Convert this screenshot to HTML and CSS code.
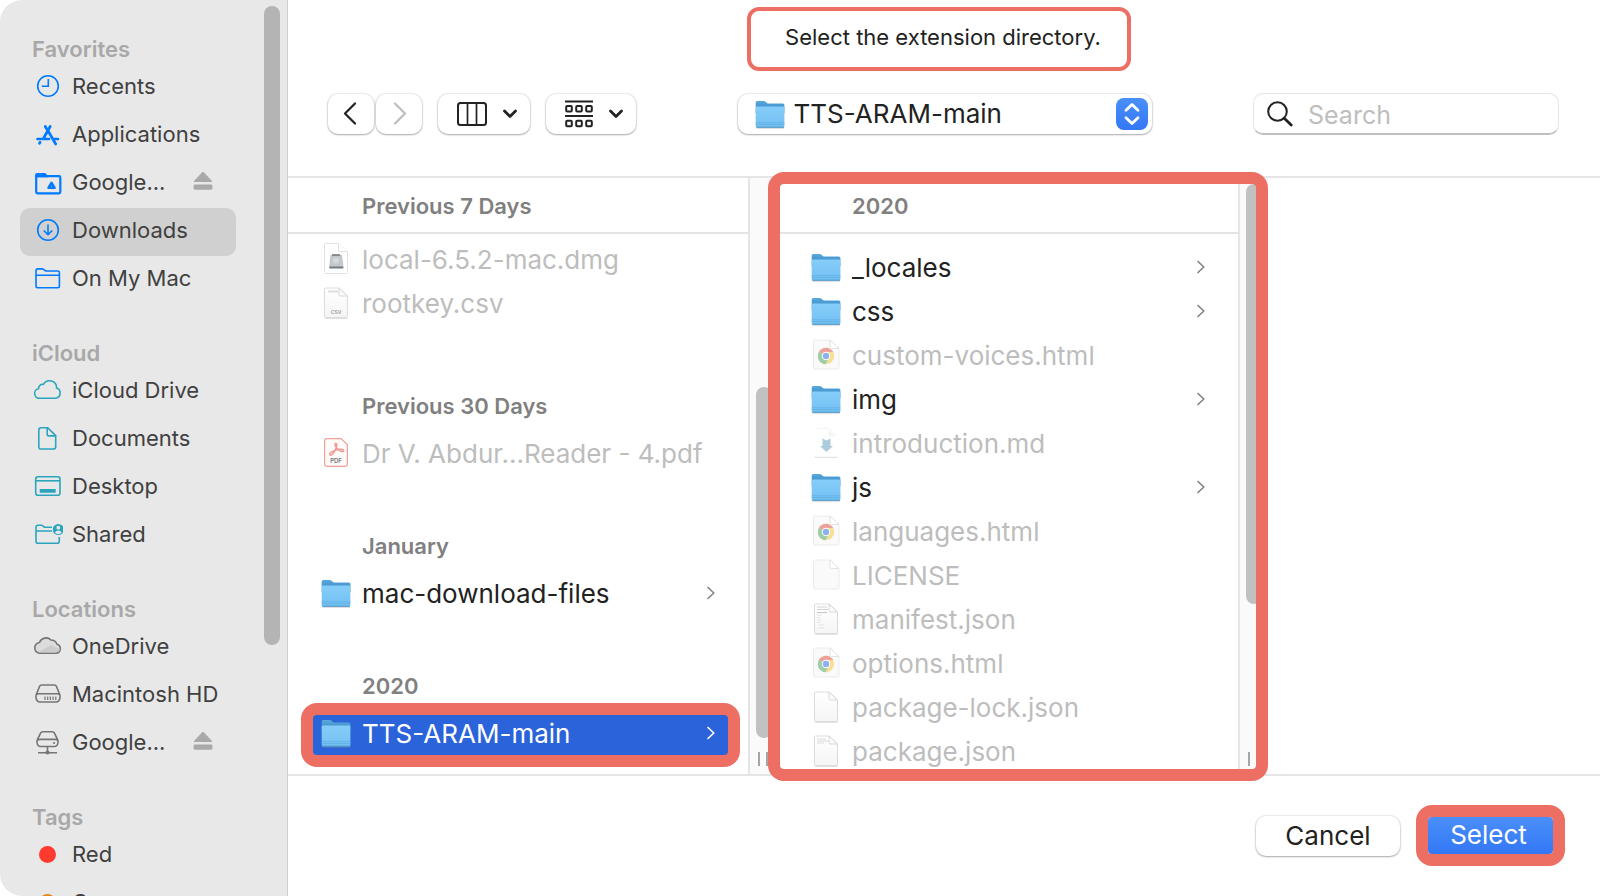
FILE: index.html
```html
<!DOCTYPE html>
<html lang="en">
<head>
<meta charset="utf-8">
<title>Select the extension directory</title>
<link rel="stylesheet" href="styles.css">
</head>
<body>
<svg class="sprite" width="0" height="0" aria-hidden="true">
  <defs>
    <linearGradient id="folder-front" x1="0" y1="0" x2="0" y2="1">
      <stop offset="0" stop-color="#86cdf9"/><stop offset="1" stop-color="#72c0f2"/>
    </linearGradient>
    <linearGradient id="folder-back" x1="0" y1="0" x2="0" y2="1">
      <stop offset="0" stop-color="#5aa9dc"/><stop offset="1" stop-color="#2f7fc4"/>
    </linearGradient>
    <linearGradient id="paper" x1="0" y1="0" x2="0" y2="1">
      <stop offset="0" stop-color="#ffffff"/><stop offset="1" stop-color="#f5f5f5"/>
    </linearGradient>
    <symbol id="i-folder" viewBox="0 0 32 32">
      <path d="M2.500 29.500h27.500v.9h-27.500z" fill="#8a8f96" opacity=".7"/>
      <path d="M1.700 4.500q0-1.500 1.500-1.500h6.600q1 0 1.700.7l1.500 1.400q.6.500 1.500.5h14.300q1.600 0 1.600 1.500v8h-28.700z" fill="url(#folder-back)"/>
      <path d="M1.700 9.800q0-1.200 1.200-1.200h26.300q1.200 0 1.200 1.200v18.200q0 1.500-1.500 1.500h-25.700q-1.500 0-1.500-1.500z" fill="url(#folder-front)"/>
      <path d="M1.700 24.700h28.700M1.700 26.500h28.700" stroke="#5eaee2" stroke-width=".7"/>
      <path d="M2.300 29.200h27.500" stroke="#4b92c4" stroke-width="1"/>
    </symbol>
    <symbol id="i-dmg" viewBox="0 0 32 32">
      <path d="M4.500 1.500q0-1 1-1h13l9 8.500v20.500q0 1-1 1h-21q-1 0-1-1z" fill="#fff" stroke="#e2e2e2"/>
      <path d="M18.500.5v6.500q0 1.500 1.500 1.500h7" fill="#fff" stroke="#e2e2e2"/>
      <path d="M10.500 12h11.500l1.300 10v3h-14v-3z" fill="#c3c8cc"/>
      <path d="M12 12h8" stroke="#6e7275" stroke-width="1.500"/>
      <circle cx="16" cy="17.500" r="3" fill="#d5d9dc"/>
      <path d="M9.300 24.500h14" stroke="#777b7e" stroke-width="2"/>
    </symbol>
    <symbol id="i-page" viewBox="0 0 32 32">
      <path d="M5 31h22.500" stroke="#c4c4c4" stroke-width="1"/>
      <path d="M4.500 2q0-1 1-1h13.500l8.500 8v20.500q0 1-1 1h-21q-1 0-1-1z" fill="url(#paper)" stroke="#dcdcdc"/>
      <path d="M19 1v6.500q0 1.500 1.500 1.500h7z" fill="#fbfbfb" stroke="#d6d6d6"/>
    </symbol>
    <symbol id="i-csv" viewBox="0 0 32 32">
      <use href="#i-page"/>
      <path d="M8 4.500h10" stroke="#dedede" stroke-width="2"/>
      <text x="16" y="27" class="badge-csv">CSV</text>
    </symbol>
    <symbol id="i-json" viewBox="0 0 32 32">
      <use href="#i-page"/>
      <path d="M7 4h10M7 6.500h11" stroke="#d3d3d3" stroke-width="1"/>
      <path d="M7 9.500h10" stroke="#c4c4c4" stroke-width="1"/>
      <path d="M7 12h5M7 14.500h3M7 17h4M7 19.500h3M9 22h5M8 25h6" stroke="#e4e4e4" stroke-width="1"/>
    </symbol>
    <symbol id="i-json-head" viewBox="0 0 32 32">
      <use href="#i-page"/>
      <path d="M7 4h9M7 6h11M7 8h7" stroke="#dadada" stroke-width="1"/>
    </symbol>
    <symbol id="i-blank" viewBox="0 0 32 32">
      <path d="M3.500 2.500q0-1.500 1.500-1.500h15l9 8.500v19q0 1.500-1.500 1.500h-22.500q-1.500 0-1.500-1.500z" fill="#fafafa" stroke="#ececec"/>
      <path d="M20 1v7q0 1.500 1.500 1.500h7.500z" fill="#fff" stroke="#dcdcdc" stroke-width=".8"/>
    </symbol>
    <symbol id="i-html" viewBox="0 0 32 32">
      <use href="#i-blank"/>
      <circle cx="16" cy="17" r="8.200" fill="#f9df94"/>
      <path d="M16 17L8.900 12.900A8.200 8.200 0 0 1 23.100 12.900z" fill="#eda19c"/>
      <path d="M16 17L8.900 12.900A8.200 8.200 0 0 0 15.500 25.200l3.600-6.400z" fill="#9dceaa"/>
      <path d="M16 12.900h7.100l-4 5z" fill="#f9df94"/>
      <circle cx="16" cy="17" r="4.200" fill="#fff"/>
      <circle cx="16" cy="17" r="3.200" fill="#8fb0f3"/>
    </symbol>
    <symbol id="i-md" viewBox="0 0 32 32">
      <path d="M5 1.300h13M19 1.500l8 8" stroke="#f2f2f2" fill="none"/>
      <path d="M18.500 2.500v5.500q0 1.500 1.500 1.500h5.500z" fill="#f6f6f6"/>
      <path d="M4.500 30.300h23" stroke="#dcdcdc"/>
      <path d="M12.500 11.500l4 2 4-2v7.500h2.500l-6.500 6-6.500-6h2.500z" fill="#aecbdb"/>
    </symbol>
    <symbol id="i-pdf" viewBox="0 0 32 32">
      <path d="M7 1.600h14l6.400 6v19.400q0 2.400-2.400 2.400h-18q-2.400 0-2.400-2.400v-23q0-2.400 2.400-2.400z" fill="#fdfafa" stroke="#f2a09a" stroke-width="1.200"/>
      <path d="M10 18c-1.500-1 1-3 4-4.200s7.500-1.800 9.200-1c1.700 1-.7 2.500-3.500 1-2.500-1.500-5.200-5.200-4.700-6.700.5-1.300 2.200-.6 1.800 1.500-.5 3-4.200 10.500-6.800 9.400z" fill="none" stroke="#f2968f" stroke-width="1.400"/>
      <text x="16" y="26" class="badge-pdf">PDF</text>
    </symbol>
    <symbol id="i-chev" viewBox="0 0 10 14">
      <path d="M2 1.500l5.800 5.500-5.800 5.500" fill="none" stroke="currentColor" stroke-width="1.700" stroke-linecap="round" stroke-linejoin="round"/>
    </symbol>
    <symbol id="i-down" viewBox="0 0 16 12">
      <path d="M2.500 3l5.500 5.500L13.500 3" fill="none" stroke="currentColor" stroke-width="2.800" stroke-linecap="round" stroke-linejoin="round"/>
    </symbol>
    <symbol id="i-eject" viewBox="0 0 20 20">
      <path d="M9.200 1.300q.8-.8 1.600 0l8.200 8.700q.6.900-.4 1h-17.200q-1-.1-.4-1z" fill="#a9a9a9"/>
      <rect x=".6" y="13.500" width="18.800" height="5.200" rx="1.400" fill="#a9a9a9"/>
    </symbol>
  </defs>
</svg>

<div class="dialog">
  <aside class="sidebar">
    <nav class="places" aria-label="Places">
      <section class="place-group">
        <h2 class="place-title">Favorites</h2>
        <a class="place blue" href="#"><svg class="place-icon" viewBox="0 0 32 32"><circle cx="17" cy="16" r="10.300"/><path d="M17.300 9v7.300h-6.500"/></svg>Recents</a>
        <a class="place blue" href="#"><svg class="place-icon" viewBox="0 0 32 32"><g stroke-width="2.700" stroke-linecap="round"><path d="M14.300 8.500l1.600 2.700M19.200 8.500L12.700 20M6.500 21h11.500M17.300 13.200l7.400 12.800M23.500 21h3.500M9.100 24.300l-.6 1"/></g></svg>Applications</a>
        <div class="place-line">
          <a class="place blue" href="#"><svg class="place-icon" viewBox="0 0 32 32"><path d="M5.200 9.500v16.500q0 1.300 1.300 1.300h21.500q1.300 0 1.300-1.300v-14.500q0-1.300-1.300-1.300h-22.800" stroke-width="2.200"/><path d="M4.100 11.300v-2.300q0-2 2-2h8l3 2.800v1.500z" fill="currentColor" stroke="none"/><path d="M20.500 16.800l3 5h-6z" stroke-width="2.600" stroke-linejoin="round"/></svg>Google...</a>
          <button class="eject" type="button" aria-label="Eject"><svg width="20" height="20"><use href="#i-eject"/></svg></button>
        </div>
        <a class="place blue current" href="#"><svg class="place-icon" viewBox="0 0 32 32"><circle cx="17" cy="16" r="10.300"/><path d="M17 10.500v10M12.800 16.500l4.200 4.200 4.200-4.200"/></svg>Downloads</a>
        <a class="place blue" href="#"><svg class="place-icon" viewBox="0 0 32 32"><path d="M5 24q0 1.700 1.700 1.700h20q1.700 0 1.700-1.700v-13.300q0-1.700-1.700-1.700h-12l-2.200-1.700q-.6-.4-1.500-.4h-4.300q-1.700 0-1.700 1.700zM5 13.300h23.400"/></svg>On My Mac</a>
      </section>
      <section class="place-group">
        <h2 class="place-title">iCloud</h2>
        <a class="place teal" href="#"><svg class="place-icon" viewBox="0 0 32 32"><path d="M9.500 24.200h14.800a5.300 5.300 0 0 0 1.300-10.300a7 7 0 0 0-13.100-3.500a4.200 4.200 0 0 0-5 4.300a4.800 4.800 0 0 0 2 9.500z"/></svg>iCloud Drive</a>
        <a class="place teal" href="#"><svg class="place-icon" viewBox="0 0 32 32"><path d="M10 5.700h6.700l8 8v11q0 2.300-2.300 2.300h-12.400q-2.200 0-2.200-2.300v-16.700q0-2.300 2.200-2.300zM16.200 6v6.200q0 1.700 1.700 1.700h6.500"/></svg>Documents</a>
        <a class="place teal" href="#"><svg class="place-icon" viewBox="0 0 32 32"><rect x="4.700" y="6.800" width="24.300" height="18.400" rx="2.300"/><path d="M4.700 10.800h24.300"/><rect x="8.700" y="19" width="16" height="3.700" rx=".6" fill="currentColor" stroke="none"/></svg>Desktop</a>
        <a class="place teal" href="#"><svg class="place-icon" viewBox="0 0 32 32"><path d="M21 9.200h-7.500l-1.700-1.400q-.6-.5-1.500-.5h-3.300q-2 0-2 2v14q0 2 2 2h19.300q2 0 2-2v-4.300M5 13h16"/><circle cx="27.300" cy="11.500" r="5.500" fill="currentColor" stroke="none"/><circle cx="27.300" cy="9.700" r="1.900" fill="#e8e8e8" stroke="none"/><path d="M23.900 14.700q1-2.300 3.400-2.300t3.400 2.300q-1.400 1.300-3.400 1.300t-3.400-1.300z" fill="#e8e8e8" stroke="none"/></svg>Shared</a>
      </section>
      <section class="place-group">
        <h2 class="place-title">Locations</h2>
        <a class="place gray" href="#"><svg class="place-icon" viewBox="0 0 32 32"><path d="M8.500 23.200h16.500a4.600 4.600 0 0 0 1-9a6.500 6.500 0 0 0-6-4.200a7 7 0 0 0-11.500 2.500a5.400 5.400 0 0 0 0 10.700z" fill="#dcdcdc"/><path d="M7 22.300l13-7 9 4-1.500 2.500-3 .7z" fill="#cbcbcb" stroke="none"/></svg>OneDrive</a>
        <a class="place gray" href="#"><svg class="place-icon" viewBox="0 0 32 32"><path d="M10.500 7h13q1.300 0 1.900 1.300l3.300 8.300q.5 1.500.3 3-.6 4.400-4 4.400h-16q-3.400 0-4-4.400-.2-1.500.3-3l3.300-8.300q.6-1.300 1.900-1.300zM5.500 16.500q1-.7 2.500-.7h18q1.500 0 2.500.7"/><path d="M14 18.500v3.500M16.700 18.500v3.500M19.400 18.500v3.500M22.100 18.500v3.500M24.800 18.500v3.500" stroke-width="1.200"/></svg>Macintosh HD</a>
        <div class="place-line">
          <a class="place gray" href="#"><svg class="place-icon" viewBox="0 0 32 32"><path d="M11.500 5.700h10q1.200 0 1.800 1.200l3.200 6.500q.7 1.500.5 3.100-.6 4-3.500 4h-14q-2.900 0-3.500-4-.2-1.600.5-3.100l3.200-6.500q.6-1.200 1.800-1.200zM6.500 14q1-.6 2.500-.6h15q1.500 0 2.500.6M16.500 20.500v5M7 26.700h19"/><circle cx="23" cy="17" r="1.100" fill="currentColor" stroke="none"/><circle cx="16.500" cy="26.500" r="2.100" fill="currentColor" stroke="none"/></svg>Google...</a>
          <button class="eject" type="button" aria-label="Eject"><svg width="20" height="20"><use href="#i-eject"/></svg></button>
        </div>
      </section>
      <section class="place-group">
        <h2 class="place-title">Tags</h2>
        <a class="place" href="#"><span class="tag red"></span>Red</a>
        <a class="place" href="#"><span class="tag orange"></span>Orange</a>
      </section>
    </nav>
    <div class="side-thumb"></div>
  </aside>

  <main class="main">
    <header class="top">
      <p class="prompt">Select the extension directory.</p>
      <div class="toolbar">
        <div class="tools">
          <div class="nav-pair">
            <button class="btn nav" type="button" aria-label="Back"><svg width="16" height="24" viewBox="0 0 16 24"><path d="M12 1.500L2 11.500l10 10" fill="none" stroke="#222" stroke-width="2.200" stroke-linecap="round" stroke-linejoin="round"/></svg></button>
            <button class="btn nav" type="button" aria-label="Forward"><svg width="16" height="24" viewBox="0 0 16 24"><path d="M4 1.500l10 10-10 10" fill="none" stroke="#bdbdbd" stroke-width="2.200" stroke-linecap="round" stroke-linejoin="round"/></svg></button>
          </div>
          <button class="btn view" type="button" aria-label="Column view"><svg width="30" height="24" viewBox="0 0 30 24"><rect x="1" y="1" width="28" height="22" rx="2.500" fill="none" stroke="#222" stroke-width="2"/><path d="M10.500 1v22M19.500 1v22" stroke="#222" stroke-width="1.700"/></svg><svg width="16" height="12"><use href="#i-down"/></svg></button>
          <button class="btn view group-view" type="button" aria-label="Group items"><svg width="28" height="28" viewBox="0 0 28 28"><g fill="none" stroke="#222" stroke-width="2"><path d="M0 1.500h28M0 16h28"/><rect x="1.200" y="6" width="5.600" height="5.600" rx="1"/><rect x="11.200" y="6" width="5.600" height="5.600" rx="1"/><rect x="21.200" y="6" width="5.600" height="5.600" rx="1"/><rect x="1.200" y="20.700" width="5.600" height="5.600" rx="1"/><rect x="11.200" y="20.700" width="5.600" height="5.600" rx="1"/><rect x="21.200" y="20.700" width="5.600" height="5.600" rx="1"/></g></svg><svg width="16" height="12"><use href="#i-down"/></svg></button>
        </div>
        <label class="btn location">
          <svg width="32" height="32"><use href="#i-folder"/></svg>
          <select class="location-select" aria-label="Folder"><option>TTS-ARAM-main</option></select>
          <span class="stepper"><svg width="32" height="32" viewBox="0 0 32 32"><path d="M10 12.300l6-5.800 6 5.800M10 19.700l6 5.800 6-5.800" fill="none" stroke="#fff" stroke-width="2.800" stroke-linecap="round" stroke-linejoin="round"/></svg></span>
        </label>
        <label class="search">
          <svg width="26" height="26" viewBox="0 0 26 26"><circle cx="10.500" cy="10.500" r="9.300" fill="none" stroke="#222" stroke-width="2"/><path d="M17.200 17.200l7 6.800" stroke="#222" stroke-width="2.800" stroke-linecap="round"/></svg>
          <input class="search-input" type="text" placeholder="Search" aria-label="Search">
        </label>
      </div>
    </header>

    <div class="columns">
      <section class="column">
        <div class="list">
          <h3 class="sticky">Previous 7 Days</h3>
          <div class="files first-files">
            <button class="file" type="button" disabled><svg width="32" height="32"><use href="#i-dmg"/></svg><span>local-6.5.2-mac.dmg</span></button>
            <button class="file" type="button" disabled><svg width="32" height="32"><use href="#i-csv"/></svg><span>rootkey.csv</span></button>
          </div>
          <h3 class="group">Previous 30 Days</h3>
          <div class="files">
            <button class="file" type="button" disabled><svg width="32" height="32"><use href="#i-pdf"/></svg><span>Dr V. Abdur...Reader - 4.pdf</span></button>
          </div>
          <h3 class="group">January</h3>
          <div class="files">
            <button class="file" type="button"><svg width="32" height="32"><use href="#i-folder"/></svg><span>mac-download-files</span><svg class="chev" width="10" height="14"><use href="#i-chev"/></svg></button>
          </div>
          <h3 class="group">2020</h3>
          <div class="files">
            <button class="file chosen" type="button"><svg width="32" height="32"><use href="#i-folder"/></svg><span>TTS-ARAM-main</span><svg class="chev" width="10" height="14"><use href="#i-chev"/></svg></button>
          </div>
        </div>
        <div class="track"><div class="thumb thumb-low"></div><div class="grip"></div></div>
      </section>
      <section class="column marked">
        <div class="list">
          <h3 class="sticky">2020</h3>
          <div class="files plain">
            <button class="file" type="button"><svg width="32" height="32"><use href="#i-folder"/></svg><span>_locales</span><svg class="chev" width="10" height="14"><use href="#i-chev"/></svg></button>
            <button class="file" type="button"><svg width="32" height="32"><use href="#i-folder"/></svg><span>css</span><svg class="chev" width="10" height="14"><use href="#i-chev"/></svg></button>
            <button class="file" type="button" disabled><svg width="32" height="32"><use href="#i-html"/></svg><span>custom-voices.html</span></button>
            <button class="file" type="button"><svg width="32" height="32"><use href="#i-folder"/></svg><span>img</span><svg class="chev" width="10" height="14"><use href="#i-chev"/></svg></button>
            <button class="file" type="button" disabled><svg width="32" height="32"><use href="#i-md"/></svg><span>introduction.md</span></button>
            <button class="file" type="button"><svg width="32" height="32"><use href="#i-folder"/></svg><span>js</span><svg class="chev" width="10" height="14"><use href="#i-chev"/></svg></button>
            <button class="file" type="button" disabled><svg width="32" height="32"><use href="#i-html"/></svg><span>languages.html</span></button>
            <button class="file" type="button" disabled><svg width="32" height="32"><use href="#i-blank"/></svg><span>LICENSE</span></button>
            <button class="file" type="button" disabled><svg width="32" height="32"><use href="#i-json"/></svg><span>manifest.json</span></button>
            <button class="file" type="button" disabled><svg width="32" height="32"><use href="#i-html"/></svg><span>options.html</span></button>
            <button class="file" type="button" disabled><svg width="32" height="32"><use href="#i-page"/></svg><span>package-lock.json</span></button>
            <button class="file" type="button" disabled><svg width="32" height="32"><use href="#i-json-head"/></svg><span>package.json</span></button>
          </div>
        </div>
        <div class="track"><div class="thumb thumb-high"></div><div class="grip"></div></div>
      </section>
    </div>

    <footer class="actions">
      <button class="btn cancel" type="button">Cancel</button>
      <button class="select" type="button">Select</button>
    </footer>
  </main>
</div>
</body>
</html>
```
FILE: styles.css
```css
* { box-sizing: border-box; }

body {
  margin: 0;
  background: #fff;
  color: #222;
  font-family: Inter, "Liberation Sans", sans-serif;
  font-size: 26px;
}

button, input, select { font: inherit; color: inherit; }
h2, h3, p { margin: 0; }
svg { display: block; flex: none; }
.sprite { position: absolute; }
.badge-csv, .badge-pdf { font-family: Inter, sans-serif; font-weight: 600; text-anchor: middle; }
.badge-csv { font-size: 5px; fill: #999; }
.badge-pdf { font-size: 6px; fill: #777; }

.dialog {
  display: grid;
  grid-template-columns: 288px 1fr;
  height: 100vh;
}

/* Sidebar */
.sidebar {
  display: flex;
  justify-content: space-between;
  min-height: 0;
  overflow: hidden;
  padding: 0 7px 0 20px;
  border-right: 1px solid #d0d0d0;
  border-radius: 22px 0 0 22px;
  background: #e8e8e8;
}
.places {
  display: flex;
  flex-direction: column;
  gap: 36px;
  width: 216px;
  padding-top: 36px;
}
.place-title {
  padding: 0 0 2px 12px;
  color: #a8a8a8;
  font-size: 22px;
  font-weight: 600;
  line-height: 26px;
}
.place {
  display: flex;
  align-items: center;
  gap: 9px;
  height: 48px;
  padding: 0 0 4px 11px;
  border-radius: 10px;
  color: #404040;
  font-size: 22px;
  text-decoration: none;
  white-space: nowrap;
}
.place.current { background: #d0d0d0; }
.place-line { display: flex; align-items: center; justify-content: space-between; }
.place-icon { width: 32px; height: 32px; fill: none; stroke: currentColor; stroke-width: 1.600; }
.blue .place-icon { color: #007aff; }
.teal .place-icon { color: #2aa5bd; }
.gray .place-icon { color: #757575; }
.eject { margin-right: 23px; padding: 0 0 6px; border: 0; background: none; }
.tag { width: 17px; height: 17px; margin: 0 7px 0 8px; border-radius: 50%; }
.red { background: #ff3b30; }
.orange { background: #e08a1e; }
.side-thumb {
  width: 16px;
  height: 639px;
  margin-top: 6px;
  border-radius: 8px;
  background: #b4b4b4;
}

/* Prompt and toolbar */
.main {
  display: grid;
  grid-template-rows: auto 1fr auto;
  min-width: 0;
  min-height: 0;
}
.top {
  display: flex;
  flex-direction: column;
  gap: 22px;
  height: 178px;
  padding: 7px 41px 0 40px;
  border-bottom: 2px solid #e5e5e5;
}
.prompt {
  align-self: center;
  width: 384px;
  height: 64px;
  margin-right: 9px;
  padding-left: 8px;
  border: 4px solid #ed6e63;
  border-radius: 12px;
  font-size: 22px;
  line-height: 52px;
  text-align: center;
}
.toolbar { display: flex; align-items: center; justify-content: space-between; }
.tools { display: flex; gap: 16px; }
.nav-pair { display: flex; gap: 2px; }
.btn {
  display: flex;
  align-items: center;
  height: 40px;
  padding: 0;
  border: 0;
  border-radius: 10px;
  background: #fff;
  box-shadow: 0 0 1px 1px rgba(0, 0, 0, .08), 0 1px 2px rgba(0, 0, 0, .28);
}
.nav { justify-content: center; width: 46px; }
.view { justify-content: space-between; width: 92px; padding: 0 12px 0 19px; }
.group-view { width: 90px; }
.location { width: 414px; padding: 0 4px 0 16px; }
.location-select {
  flex: 1;
  min-width: 0;
  height: 100%;
  padding: 0 0 2px 8px;
  border: 0;
  background: none;
  appearance: none;
}
.stepper { border-radius: 8px; background: linear-gradient(#4a8ff8, #3377f6); }
.search {
  display: flex;
  align-items: center;
  gap: 15px;
  width: 306px;
  height: 42px;
  padding: 0 13px;
  border: 1px solid #e4e4e4;
  border-bottom: 2px solid #c0c0c0;
  border-radius: 10px;
}
.search-input { flex: 1; min-width: 0; padding: 2px 0 0; border: 0; outline: 0; background: none; font-size: 25px; }
.search-input::placeholder { color: #bebebe; opacity: 1; }

/* Column browser */
.columns { display: flex; min-height: 0; }
.column { display: flex; width: 490px; min-height: 0; }
.list { flex: 1; min-width: 0; overflow: clip; }
.sticky, .group { padding-left: 74px; color: #808080; font-size: 22px; font-weight: 600; }
.sticky { height: 56px; border-bottom: 2px solid #e4e4e4; line-height: 57px; }
.group { padding-top: 47px; line-height: 49px; }
.files { padding: 0 20px 0 24px; }
.first-files { padding-top: 3px; padding-bottom: 10px; }
.plain { padding-top: 11px; }
.file {
  display: flex;
  align-items: center;
  gap: 10px;
  width: 100%;
  height: 44px;
  padding: 0 12px 0 8px;
  border: 0;
  background: none;
  text-align: left;
  white-space: nowrap;
}
.file:disabled { color: #bdbdbd; }
.chev { margin-left: auto; color: #858585; }
.chosen {
  position: relative;
  background: #2a63da;
  color: #fff;
}
.chosen .chev { color: #fff; }
.chosen::after {
  content: "";
  position: absolute;
  inset: -8px -12px -12px -11px;
  border: 12px solid #ed6e63;
  border-radius: 16px;
}
.track {
  display: flex;
  flex-direction: column;
  align-items: flex-start;
  justify-content: space-between;
  width: 30px;
  padding: 6px 0 8px 6px;
  border-left: 2px solid #e5e5e5;
  background: #fafafa;
}
.thumb { width: 16px; border-radius: 8px; background: #c1c1c1; }
.thumb-low { height: 351px; margin-top: 203px; }
.thumb-high { height: 420px; }
.grip { width: 10px; height: 14px; margin-left: 2px; border: 2px solid #a5a5a5; border-width: 0 2px; }
.marked { position: relative; }
.marked::after {
  content: "";
  position: absolute;
  inset: -6px 0 -7px -10px;
  border: 12px solid #ed6e63;
  border-radius: 16px;
  pointer-events: none;
}

/* Buttons */
.actions {
  display: flex;
  align-items: flex-start;
  justify-content: flex-end;
  gap: 16px;
  height: 122px;
  padding: 29px 35px 0 0;
  border-top: 2px solid #e5e5e5;
}
.cancel { justify-content: center; width: 144px; margin-top: 11px; padding-bottom: 2px; }
.select {
  width: 149px;
  height: 61px;
  padding: 0 4px 2px 0;
  border: 12px solid #ed6e63;
  border-radius: 16px;
  background: linear-gradient(#4a8ff8, #3377f6) padding-box;
  color: #fff;
}
```
